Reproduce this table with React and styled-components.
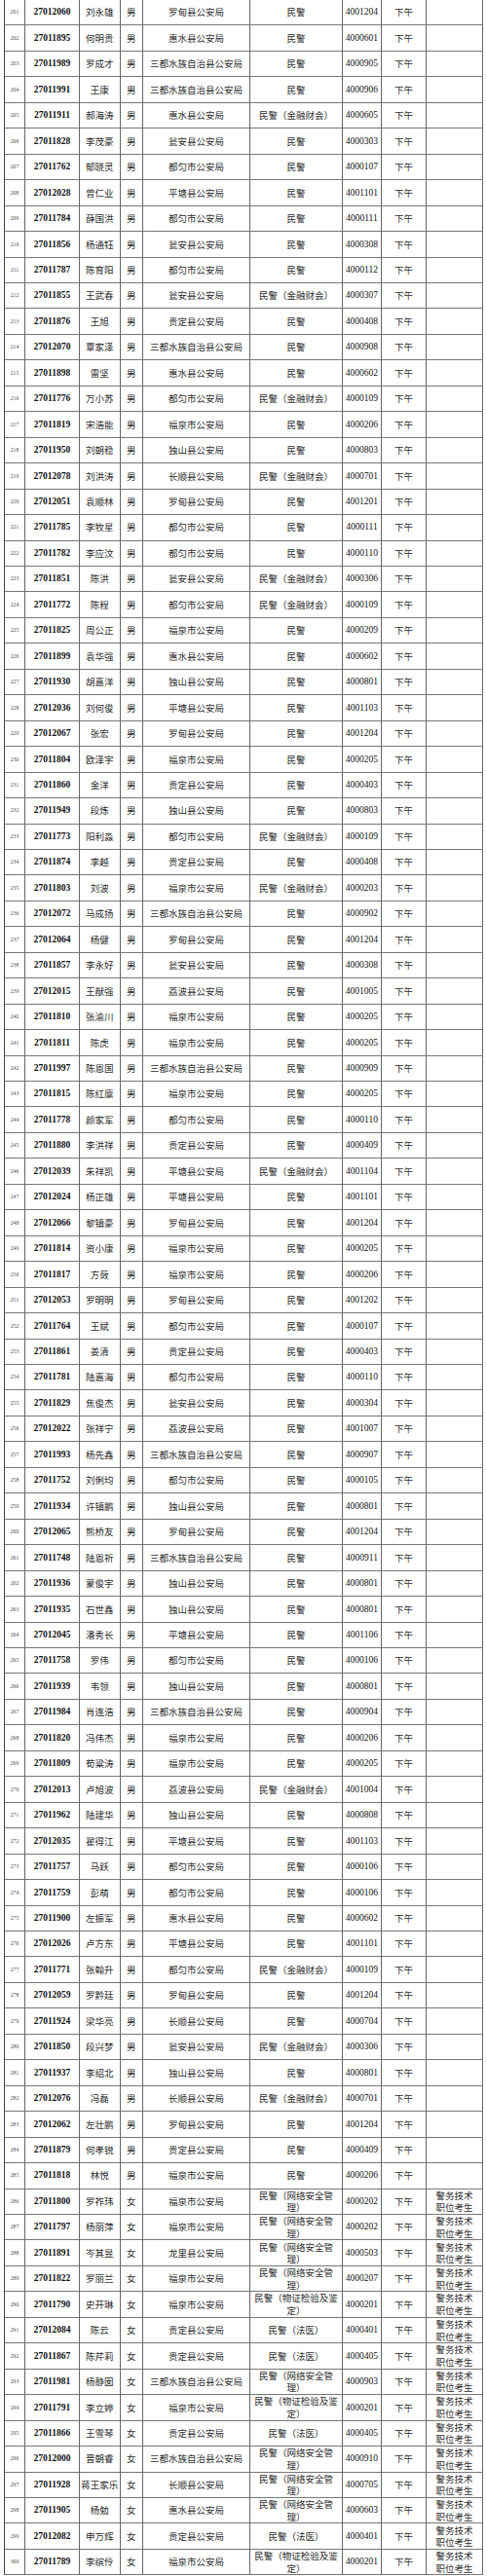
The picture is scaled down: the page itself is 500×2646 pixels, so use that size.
import React from "react";
import styled, { createGlobalStyle } from "styled-components";

const GlobalStyle = createGlobalStyle`
  html, body {
    margin: 0;
    padding: 0;
    background: #ffffff;
  }
  body {
    font-family: "Noto Sans CJK SC", "Liberation Serif", serif;
  }
`;

const Sheet = styled.div`
  display: grid;
  grid-template-columns: 21px 56px 41.6px 23.4px 110px 95px 40px 46px 58px;
  grid-auto-rows: 26.46px;
  width: 492px;
  box-sizing: border-box;
  margin-left: 4px;
  border-left: 1px solid #444444;
`;

const Cell = styled.div`
  box-sizing: border-box;
  display: flex;
  align-items: center;
  justify-content: center;
  text-align: center;
  border-right: 1px solid #666666;
  border-bottom: 1px solid #777777;
  overflow: hidden;
  padding: 0 ${(p) => p.$pad || 0}px;
  color: #2c2c2c;
  font-family: "Noto Sans CJK SC", sans-serif;
  font-size: 9.5px;
  line-height: 12.6px;
  white-space: normal;
  word-break: normal;
  line-break: strict;
`;

const IndexCell = styled(Cell)`
  font-family: "Liberation Serif", serif;
  font-size: 5.6px;
  color: #4a4a4a;
`;

const CodeCell = styled(Cell)`
  font-family: "Liberation Serif", serif;
  font-size: 9.5px;
  font-weight: ${(p) => (p.$bold ? 700 : 400)};
  color: #111111;
`;

const rows = [
  ["27012060", "刘永雄", "男", "罗甸县公安局", "民警", "4001204"],
  ["27011895", "何明贵", "男", "惠水县公安局", "民警", "4000601"],
  ["27011989", "罗成才", "男", "三都水族自治县公安局", "民警", "4000905"],
  ["27011991", "王康", "男", "三都水族自治县公安局", "民警", "4000906"],
  ["27011911", "郝海涛", "男", "惠水县公安局", "民警（金融财会）", "4000605"],
  ["27011828", "李茂豪", "男", "瓮安县公安局", "民警", "4000303"],
  ["27011762", "郁晓灵", "男", "都匀市公安局", "民警", "4000107"],
  ["27012028", "曾仁业", "男", "平塘县公安局", "民警", "4001101"],
  ["27011784", "薛国洪", "男", "都匀市公安局", "民警", "4000111"],
  ["27011856", "杨通钰", "男", "瓮安县公安局", "民警", "4000308"],
  ["27011787", "陈育阳", "男", "都匀市公安局", "民警", "4000112"],
  ["27011855", "王武春", "男", "瓮安县公安局", "民警（金融财会）", "4000307"],
  ["27011876", "王旭", "男", "贵定县公安局", "民警", "4000408"],
  ["27012070", "覃家泽", "男", "三都水族自治县公安局", "民警", "4000908"],
  ["27011898", "雷坚", "男", "惠水县公安局", "民警", "4000602"],
  ["27011776", "万小苏", "男", "都匀市公安局", "民警（金融财会）", "4000109"],
  ["27011819", "宋浩能", "男", "福泉市公安局", "民警", "4000206"],
  ["27011950", "刘朝稳", "男", "独山县公安局", "民警", "4000803"],
  ["27012078", "刘洪涛", "男", "长顺县公安局", "民警（金融财会）", "4000701"],
  ["27012051", "袁顺林", "男", "罗甸县公安局", "民警", "4001201"],
  ["27011785", "李牧星", "男", "都匀市公安局", "民警", "4000111"],
  ["27011782", "李应汶", "男", "都匀市公安局", "民警", "4000110"],
  ["27011851", "陈洪", "男", "瓮安县公安局", "民警（金融财会）", "4000306"],
  ["27011772", "陈程", "男", "都匀市公安局", "民警（金融财会）", "4000109"],
  ["27011825", "周公正", "男", "福泉市公安局", "民警", "4000209"],
  ["27011899", "袁华强", "男", "惠水县公安局", "民警", "4000602"],
  ["27011930", "胡嘉洋", "男", "独山县公安局", "民警", "4000801"],
  ["27012036", "刘何俊", "男", "平塘县公安局", "民警", "4001103"],
  ["27012067", "张宏", "男", "罗甸县公安局", "民警", "4001204"],
  ["27011804", "欧泽宇", "男", "福泉市公安局", "民警", "4000205"],
  ["27011860", "金洋", "男", "贵定县公安局", "民警", "4000403"],
  ["27011949", "段炼", "男", "独山县公安局", "民警", "4000803"],
  ["27011773", "阳利淼", "男", "都匀市公安局", "民警（金融财会）", "4000109"],
  ["27011874", "李越", "男", "贵定县公安局", "民警", "4000408"],
  ["27011803", "刘波", "男", "福泉市公安局", "民警（金融财会）", "4000203"],
  ["27012072", "马成扬", "男", "三都水族自治县公安局", "民警", "4000902"],
  ["27012064", "杨健", "男", "罗甸县公安局", "民警", "4001204"],
  ["27011857", "李永好", "男", "瓮安县公安局", "民警", "4000308"],
  ["27012015", "王猷强", "男", "荔波县公安局", "民警", "4001005"],
  ["27011810", "张渝川", "男", "福泉市公安局", "民警", "4000205"],
  ["27011811", "陈虎", "男", "福泉市公安局", "民警", "4000205"],
  ["27011997", "陈恩国", "男", "三都水族自治县公安局", "民警", "4000909"],
  ["27011815", "陈红廪", "男", "福泉市公安局", "民警", "4000205"],
  ["27011778", "颜家军", "男", "都匀市公安局", "民警", "4000110"],
  ["27011880", "李洪祥", "男", "贵定县公安局", "民警", "4000409"],
  ["27012039", "朱祥凯", "男", "平塘县公安局", "民警（金融财会）", "4001104"],
  ["27012024", "杨正雄", "男", "平塘县公安局", "民警", "4001101"],
  ["27012066", "黎镇豪", "男", "罗甸县公安局", "民警", "4001204"],
  ["27011814", "资小康", "男", "福泉市公安局", "民警", "4000205"],
  ["27011817", "方蔹", "男", "福泉市公安局", "民警", "4000206"],
  ["27012053", "罗明明", "男", "罗甸县公安局", "民警", "4001202"],
  ["27011764", "王斌", "男", "都匀市公安局", "民警", "4000107"],
  ["27011861", "姜清", "男", "贵定县公安局", "民警", "4000403"],
  ["27011781", "陆嘉海", "男", "都匀市公安局", "民警", "4000110"],
  ["27011829", "焦俊杰", "男", "瓮安县公安局", "民警", "4000304"],
  ["27012022", "张祥宁", "男", "荔波县公安局", "民警", "4001007"],
  ["27011993", "杨先鑫", "男", "三都水族自治县公安局", "民警", "4000907"],
  ["27011752", "刘俐均", "男", "都匀市公安局", "民警", "4000105"],
  ["27011934", "许镇鹏", "男", "独山县公安局", "民警", "4000801"],
  ["27012065", "熊桥友", "男", "罗甸县公安局", "民警", "4001204"],
  ["27011748", "陆恩祈", "男", "三都水族自治县公安局", "民警", "4000911"],
  ["27011936", "蒙俊宇", "男", "独山县公安局", "民警", "4000801"],
  ["27011935", "石世鑫", "男", "独山县公安局", "民警", "4000801"],
  ["27012045", "潘秀长", "男", "平塘县公安局", "民警", "4001106"],
  ["27011758", "罗伟", "男", "都匀市公安局", "民警", "4000106"],
  ["27011939", "韦领", "男", "独山县公安局", "民警", "4000801"],
  ["27011984", "肖连浩", "男", "三都水族自治县公安局", "民警", "4000904"],
  ["27011820", "冯伟杰", "男", "福泉市公安局", "民警", "4000206"],
  ["27011809", "荀粱涛", "男", "福泉市公安局", "民警", "4000205"],
  ["27012013", "卢旭波", "男", "荔波县公安局", "民警（金融财会）", "4001004"],
  ["27011962", "陆建华", "男", "独山县公安局", "民警", "4000808"],
  ["27012035", "翟得江", "男", "平塘县公安局", "民警", "4001103"],
  ["27011757", "马跃", "男", "都匀市公安局", "民警", "4000106"],
  ["27011759", "彭萌", "男", "都匀市公安局", "民警", "4000106"],
  ["27011900", "左振军", "男", "惠水县公安局", "民警", "4000602"],
  ["27012026", "卢方东", "男", "平塘县公安局", "民警", "4001101"],
  ["27011771", "张翰升", "男", "都匀市公安局", "民警（金融财会）", "4000109"],
  ["27012059", "罗黔廷", "男", "罗甸县公安局", "民警", "4001204"],
  ["27011924", "梁华亮", "男", "长顺县公安局", "民警", "4000704"],
  ["27011850", "段兴梦", "男", "瓮安县公安局", "民警（金融财会）", "4000306"],
  ["27011937", "李绍北", "男", "独山县公安局", "民警", "4000801"],
  ["27012076", "冯磊", "男", "长顺县公安局", "民警（金融财会）", "4000701"],
  ["27012062", "左壮鹏", "男", "罗甸县公安局", "民警", "4001204"],
  ["27011879", "何孝锐", "男", "贵定县公安局", "民警", "4000409"],
  ["27011818", "林悦", "男", "福泉市公安局", "民警", "4000206"],
  ["27011800", "罗祚玮", "女", "福泉市公安局", "民警（网络安全管理）", "4000202"],
  ["27011797", "杨丽萍", "女", "福泉市公安局", "民警（网络安全管理）", "4000202"],
  ["27011891", "岑其昱", "女", "龙里县公安局", "民警（网络安全管理）", "4000503"],
  ["27011822", "罗丽兰", "女", "福泉市公安局", "民警（网络安全管理）", "4000207"],
  ["27011790", "史开琳", "女", "福泉市公安局", "民警（物证检验及鉴定）", "4000201"],
  ["27012084", "陈云", "女", "贵定县公安局", "民警（法医）", "4000401"],
  ["27011867", "陈芹莉", "女", "贵定县公安局", "民警（法医）", "4000405"],
  ["27011981", "杨静囡", "女", "三都水族自治县公安局", "民警（网络安全管理）", "4000903"],
  ["27011791", "李立婷", "女", "福泉市公安局", "民警（物证检验及鉴定）", "4000201"],
  ["27011866", "王雪琴", "女", "贵定县公安局", "民警（法医）", "4000405"],
  ["27012000", "晋朝睿", "女", "三都水族自治县公安局", "民警（网络安全管理）", "4000910"],
  ["27011928", "蒋王家乐", "女", "长顺县公安局", "民警（网络安全管理）", "4000705"],
  ["27011905", "杨勉", "女", "惠水县公安局", "民警（网络安全管理）", "4000603"],
  ["27012082", "申万辉", "女", "贵定县公安局", "民警（法医）", "4000401"],
  ["27011789", "李缤伶", "女", "福泉市公安局", "民警（物证检验及鉴定）", "4000201"],
];

export default function App() {
  return (
    <>
      <GlobalStyle />
      <Sheet>
        {rows.map(([code, name, sex, unit, post, postCode], i) => {
          const tech = sex === "女";
          return (
            <React.Fragment key={code + i}>
              <IndexCell>{201 + i}</IndexCell>
              <CodeCell $bold>{code}</CodeCell>
              <Cell>{name}</Cell>
              <Cell>{sex}</Cell>
              <Cell>{unit}</Cell>
              <Cell $pad={3}>{post}</Cell>
              <CodeCell>{postCode}</CodeCell>
              <Cell>下午</Cell>
              <Cell $pad={6}>{tech ? "警务技术职位考生" : ""}</Cell>
            </React.Fragment>
          );
        })}
      </Sheet>
    </>
  );
}
